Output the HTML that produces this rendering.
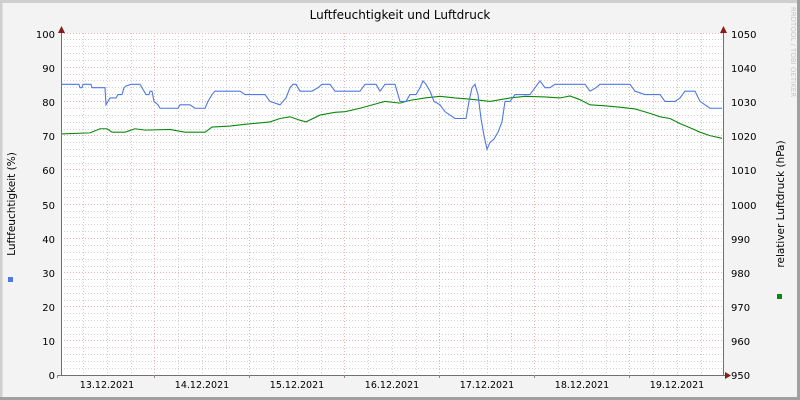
<!DOCTYPE html>
<html><head><meta charset="utf-8"><style>
html,body{margin:0;padding:0;width:800px;height:400px;overflow:hidden;background:#f3f3f3}
svg{display:block;font-family:"DejaVu Sans","Liberation Sans",sans-serif}
</style></head><body>
<svg width="800" height="400" viewBox="0 0 800 400" xmlns="http://www.w3.org/2000/svg">
<rect x="0" y="0" width="800" height="400" fill="#f3f3f3"/>
<path d="M0 1.5H799M1 0V400" stroke="#cfcfcf" stroke-width="3"/>
<path d="M0 398.5H800M798.5 0V400" stroke="#a0a0a0" stroke-width="3"/>
<rect x="61" y="33" width="662" height="342" fill="#fff"/>
<g stroke="#d0d0d0" stroke-dasharray="1,2" stroke-width="1">
<path d="M61 368.5H723M61 361.5H723M61 354.5H723M61 347.5H723M61 334.5H723M61 327.5H723M61 320.5H723M61 313.5H723M61 300.5H723M61 293.5H723M61 286.5H723M61 279.5H723M61 266.5H723M61 259.5H723M61 252.5H723M61 245.5H723M61 231.5H723M61 224.5H723M61 217.5H723M61 211.5H723M61 197.5H723M61 190.5H723M61 183.5H723M61 176.5H723M61 163.5H723M61 156.5H723M61 149.5H723M61 142.5H723M61 129.5H723M61 122.5H723M61 115.5H723M61 108.5H723M61 94.5H723M61 87.5H723M61 80.5H723M61 74.5H723M61 60.5H723M61 53.5H723M61 46.5H723M61 39.5H723"/>
<path d="M83.5 33V375M107.5 33V375M131.5 33V375M178.5 33V375M202.5 33V375M226.5 33V375M273.5 33V375M297.5 33V375M321.5 33V375M368.5 33V375M392.5 33V375M416.5 33V375M463.5 33V375M487.5 33V375M511.5 33V375M558.5 33V375M582.5 33V375M606.5 33V375M653.5 33V375M677.5 33V375M701.5 33V375"/>
</g>
<g stroke="#e8b0b0" stroke-dasharray="1,2" stroke-width="1">
<path d="M61 340.5H723M61 306.5H723M61 272.5H723M61 238.5H723M61 204.5H723M61 169.5H723M61 135.5H723M61 101.5H723M61 67.5H723M61 33.5H723"/>
<path d="M154.5 33V375M249.5 33V375M344.5 33V375M439.5 33V375M534.5 33V375M629.5 33V375"/>
</g>
<g transform="translate(0,375) scale(1,-3.42)" fill="none">
<polyline vector-effect="non-scaling-stroke" stroke="#0a8a0a" stroke-width="1.1" points="61,70.5 90,70.8 100,72 107,72 112,71 125,71 135,72 145,71.6 170,71.8 185,71 205,71 212,72.5 230,72.8 245,73.3 270,74 280,75 290,75.5 300,74.5 306,74 320,76 335,76.8 345,77 360,78 375,79.2 385,80 400,79.5 410,80.3 425,81 440,81.5 455,81 465,80.8 475,80.5 490,80 500,80.5 510,81 525,81.5 545,81.3 560,81 570,81.6 580,80.5 590,79 605,78.7 620,78.3 635,77.8 650,76.5 660,75.5 670,75 680,73.5 690,72.3 700,71 710,70 722,69.2"/>
<polyline vector-effect="non-scaling-stroke" stroke="#4d78e6" stroke-width="1.1" points="61,85 79,85 80,84 82,84 83,85 91,85 92,84 105,84 106,79 108,80 110,81 116,81 118,82 122,82 124,84 126,84.5 131,85 140,85 142,84 144,83 146,82 149,82 150,83 152,83 154,80 158,79 160,78 178,78 180,79 190,79 195,78 205,78 208,80 212,82 215,83 240,83 245,82 265,82 270,80 280,79 286,81 290,84 293,85 296,85 300,83 312,83 318,84 322,85 330,85 335,83 360,83 365,85 376,85 380,83 385,85 395,85 400,80 406,80 410,82 416,82 420,84 423,86 426,85 430,83 434,80 440,79 445,77 450,76 455,75 466,75 469,80 472,84 475,85 478,82 481,75 484,70 487,66 490,68 494,69 498,71 502,74 505,80 510,80 515,82 530,82 535,84 540,86 545,84 550,84 555,85 585,85 590,83 596,84 600,85 630,85 635,83 645,82 660,82 665,80 675,80 680,81 685,83 695,83 700,80 705,79 710,78 722,78"/>
</g>
<path d="M61.5 33V376M723.5 33V376M58 375.5H727" stroke="#707070" stroke-width="1"/>
<path d="M57.5 375V378M154.5 375V378M249.5 375V378M344.5 375V378M439.5 375V378M534.5 375V378M629.5 375V378" stroke="#888"/>
<polygon points="58,33 65,33 61.5,26" fill="#8b1a1a"/>
<polygon points="720,33 727,33 723.5,26" fill="#8b1a1a"/>
<polygon points="725,372 725,379 731,375.5" fill="#8b1a1a"/>
<g font-size="10" fill="#000" text-anchor="end">
<text x="55" y="38">100</text><text x="55" y="72">90</text><text x="55" y="106">80</text><text x="55" y="140">70</text><text x="55" y="174">60</text><text x="55" y="209">50</text><text x="55" y="243">40</text><text x="55" y="277">30</text><text x="55" y="311">20</text><text x="55" y="345">10</text><text x="55" y="379">0</text>
</g>
<g font-size="10" fill="#000">
<text x="731" y="38">1050</text><text x="731" y="72">1040</text><text x="731" y="106">1030</text><text x="731" y="140">1020</text><text x="731" y="174">1010</text><text x="731" y="209">1000</text><text x="731" y="243">990</text><text x="731" y="277">980</text><text x="731" y="311">970</text><text x="731" y="345">960</text><text x="731" y="379">950</text>
</g>
<g font-size="9.5" fill="#000" text-anchor="middle">
<text x="107" y="388">13.12.2021</text><text x="202" y="388">14.12.2021</text><text x="297" y="388">15.12.2021</text><text x="392" y="388">16.12.2021</text><text x="487" y="388">17.12.2021</text><text x="582" y="388">18.12.2021</text><text x="677" y="388">19.12.2021</text>
</g>
<text x="400" y="19" font-size="12" text-anchor="middle" fill="#000">Luftfeuchtigkeit und Luftdruck</text>
<text transform="translate(15,204) rotate(-90)" font-size="10.5" text-anchor="middle" fill="#000">Luftfeuchtigkeit (%)</text>
<text transform="translate(784,204) rotate(-90)" font-size="10.5" text-anchor="middle" fill="#000">relativer Luftdruck (hPa)</text>
<text transform="translate(791,52) rotate(90)" font-size="7" text-anchor="middle" fill="#c8c8c8">RRDTOOL / TOBI OETIKER</text>
<rect x="8" y="277" width="5" height="5" fill="#4d78e6"/>
<rect x="777" y="294" width="5" height="5" fill="#0a8a0a"/>
</svg>
</body></html>
